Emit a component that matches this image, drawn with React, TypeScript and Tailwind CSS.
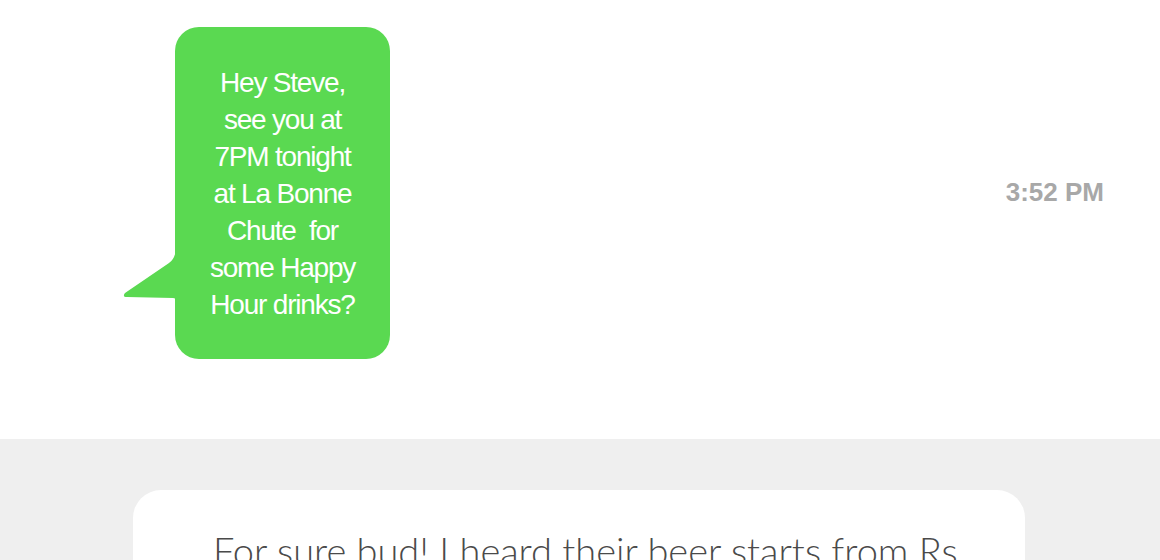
import React from "react";

export default function App() {
  return (
    <div className="w-[1160px] h-[560px] overflow-hidden bg-white">
      <div className="relative h-[439px] flex items-start">
        <div className="relative ml-[175px] mt-[27px] w-[215px] h-[332px] rounded-[24px] bg-[#5ad951] flex items-center justify-center">
          <svg
            className="absolute left-[-52px] top-[222px]"
            width="56"
            height="52"
            viewBox="0 0 56 52"
          >
            <path
              d="M53 0 L53 0 Q52 10 46 14 L2 44 Q-1 48 4 48 L50 49 Q53 49 53 52 L56 52 L56 0 Z"
              fill="#5ad951"
            />
          </svg>
          <p
            className="text-center text-white text-[28px] leading-[37px] tracking-[-1.2px] whitespace-pre"
            style={{ fontFamily: '"Liberation Sans", Arial, sans-serif' }}
          >
            {"Hey Steve,\nsee you at\n7PM tonight\nat La Bonne\nChute  for\nsome Happy\nHour drinks?"}
          </p>
        </div>
        <div className="flex-1" />
        <div
          className="mt-[176px] mr-[56px] text-[26px] leading-[32px] font-bold text-[#a8a8a8]"
          style={{ fontFamily: '"Liberation Sans", Arial, sans-serif' }}
        >
          3:52 PM
        </div>
      </div>
      <div className="h-[121px] bg-[#efefef] pt-[51px] pl-[133px] pr-[135px]">
        <div className="h-[200px] rounded-[28px] bg-white pl-[80px] pt-[40px]">
          <p
            className="text-[38px] leading-[40px] font-light text-[#4a4a4a] whitespace-nowrap tracking-[0px]"
            style={{ fontFamily: 'Lato, "Open Sans", sans-serif' }}
          >
            For sure bud! I heard their beer starts from Rs
          </p>
        </div>
      </div>
    </div>
  );
}
